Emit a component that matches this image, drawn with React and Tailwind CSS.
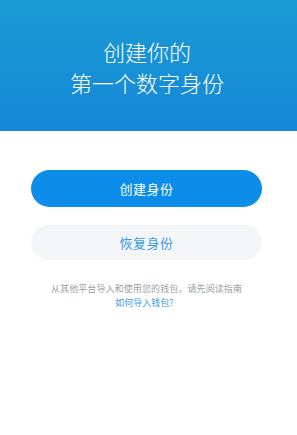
import React from 'react';

const cjk = { fontFamily: '"Noto Sans CJK SC", "Noto Sans", sans-serif' };

const App = () => {
  return (
    <div className="w-[297px] h-[435px] bg-white flex flex-col" style={cjk}>
      {/* Header */}
      <div className="h-[131px] bg-gradient-to-b from-[#1a9bd4] to-[#1787d8] flex flex-col items-center justify-center pt-[3px] pr-[3px]">
        <h1 className="text-[22px] leading-[31px] font-light text-white text-center">
          创建你的
          <br />
          第一个数字身份
        </h1>
      </div>

      {/* Actions */}
      <div className="w-[293px] flex flex-col items-center pt-[39px]">
        <button className="w-[231px] h-[37px] rounded-full bg-[#0b8de9] text-white text-[13px] tracking-[0.5px]">
          创建身份
        </button>
        <button className="mt-[18px] w-[231px] h-[35px] rounded-full bg-[#f3f5f7] text-[#3d9be2] text-[13px] tracking-[0.5px]">
          恢复身份
        </button>

        <p className="mt-[22px] text-[9px] leading-[14px] text-[#9aa0a6] text-center tracking-[0.1px]">
          从其他平台导入和使用您的钱包，请先阅读指南
        </p>
        <a className="text-[9px] leading-[14px] text-[#3d9be2] text-center pr-[4px]">如何导入钱包?</a>
      </div>
    </div>
  );
};

export default App;
